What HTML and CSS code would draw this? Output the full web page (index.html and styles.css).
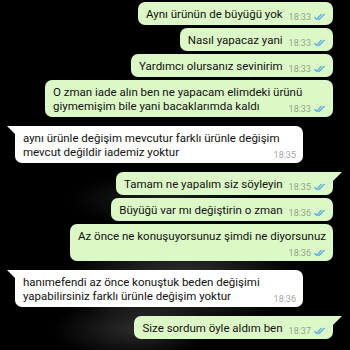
FILE: index.html
```html
<!DOCTYPE html>
<html lang="tr">
<head>
  <meta charset="UTF-8">
  <meta name="viewport" content="width=device-width, initial-scale=1.0">
  <title>Sohbet</title>
  <link rel="stylesheet" href="styles.css">
</head>
<body>

<div class="chat">
  <div class="msg out">
    <span class="text">Aynı ürünün de büyüğü yok</span>
    <span class="meta">18:33 <svg class="ticks" viewBox="0 0 16 10"><path d="M1 5.5l2.6 2.6L9.6 1.5M6.2 8.1l0.4 0.4L13.6 1.5"/></svg></span>
  </div>
  <div class="msg out">
    <span class="text">Nasıl yapacaz yani</span>
    <span class="meta">18:33 <svg class="ticks" viewBox="0 0 16 10"><path d="M1 5.5l2.6 2.6L9.6 1.5M6.2 8.1l0.4 0.4L13.6 1.5"/></svg></span>
  </div>
  <div class="msg out">
    <span class="text">Yardımcı olursanız sevinirim</span>
    <span class="meta">18:33 <svg class="ticks" viewBox="0 0 16 10"><path d="M1 5.5l2.6 2.6L9.6 1.5M6.2 8.1l0.4 0.4L13.6 1.5"/></svg></span>
  </div>
  <div class="msg out">
    <span class="text">O zman iade alın ben ne yapacam elimdeki ürünü giymemişim bile yani bacaklarımda kaldı</span>
    <span class="meta">18:33 <svg class="ticks" viewBox="0 0 16 10"><path d="M1 5.5l2.6 2.6L9.6 1.5M6.2 8.1l0.4 0.4L13.6 1.5"/></svg></span>
  </div>

  <div class="msg in first">
    <span class="text">aynı ürünle değişim mevcutur farklı ürünle değişim mevcut değildir iademiz yoktur</span>
    <span class="meta">18:35</span>
  </div>

  <div class="msg out first">
    <span class="text">Tamam ne yapalım siz söyleyin</span>
    <span class="meta">18:35 <svg class="ticks" viewBox="0 0 16 10"><path d="M1 5.5l2.6 2.6L9.6 1.5M6.2 8.1l0.4 0.4L13.6 1.5"/></svg></span>
  </div>
  <div class="msg out">
    <span class="text">Büyüğü var mı değiştirin o zman</span>
    <span class="meta">18:36 <svg class="ticks" viewBox="0 0 16 10"><path d="M1 5.5l2.6 2.6L9.6 1.5M6.2 8.1l0.4 0.4L13.6 1.5"/></svg></span>
  </div>
  <div class="msg out wrap">
    <span class="text">Az önce ne konuşuyorsunuz şimdi ne diyorsunuz</span>
    <span class="meta">18:36 <svg class="ticks" viewBox="0 0 16 10"><path d="M1 5.5l2.6 2.6L9.6 1.5M6.2 8.1l0.4 0.4L13.6 1.5"/></svg></span>
  </div>

  <div class="msg in first">
    <span class="text">hanımefendi az önce konuştuk beden değişimi yapabilirsiniz farklı ürünle değişim yoktur</span>
    <span class="meta">18:36</span>
  </div>

  <div class="msg out first">
    <span class="text">Size sordum öyle aldım ben</span>
    <span class="meta">18:37 <svg class="ticks" viewBox="0 0 16 10"><path d="M1 5.5l2.6 2.6L9.6 1.5M6.2 8.1l0.4 0.4L13.6 1.5"/></svg></span>
  </div>
</div>

</body>
</html>
```

FILE: styles.css
```css
* {
  box-sizing: border-box;
}

body {
  margin: 0;
  height: 350px;
  overflow: hidden;
  font-family: Roboto, "Noto Sans", sans-serif;
  background:
    radial-gradient(ellipse 120px 50px at 52% 80%, rgba(95, 95, 95, 0.55), transparent),
    radial-gradient(ellipse 80px 32px at 38% 94%, rgba(85, 85, 85, 0.5), transparent),
    radial-gradient(ellipse 100px 28px at 48% 57%, rgba(75, 75, 75, 0.45), transparent),
    radial-gradient(ellipse 60px 20px at 62% 69%, rgba(80, 80, 80, 0.4), transparent),
    #000;
}

.chat {
  display: flex;
  flex-direction: column;
  padding: 2px 17px 0 15px;
}

.msg {
  position: relative;
  display: flow-root;
  max-width: 288px;
  margin-top: 3px;
  padding: 5px 7px 3px 8px;
  border-radius: 7px;
  font-size: 11.5px;
  line-height: 14px;
  color: #111;
}

.msg:first-child {
  margin-top: 0;
}

.out {
  align-self: flex-end;
  background-color: #dcf8c6;
}

.in {
  align-self: flex-start;
  background-color: #fff;
}

.first {
  margin-top: 9px;
}

.out.first {
  border-top-right-radius: 0;
}

.out.first::after {
  content: "";
  position: absolute;
  top: 0;
  right: -9px;
  border-top: 9px solid #dcf8c6;
  border-right: 9px solid transparent;
}

.in.first {
  border-top-left-radius: 0;
}

.in.first::before {
  content: "";
  position: absolute;
  top: 0;
  left: -8px;
  border-top: 8px solid #fff;
  border-left: 8px solid transparent;
}

.meta {
  float: right;
  display: flex;
  align-items: center;
  gap: 3px;
  margin: 5px 0 0 6px;
  font-size: 9px;
  line-height: 10px;
  color: #93a38d;
}

.in .meta {
  color: #a7a7a7;
}

.wrap .meta {
  float: none;
  justify-content: flex-end;
  margin: 5px 0 0;
}

.ticks {
  width: 12px;
  height: 8px;
  fill: none;
  stroke: #3fa6ea;
  stroke-width: 1.6;
  stroke-linecap: round;
  stroke-linejoin: round;
}
```
